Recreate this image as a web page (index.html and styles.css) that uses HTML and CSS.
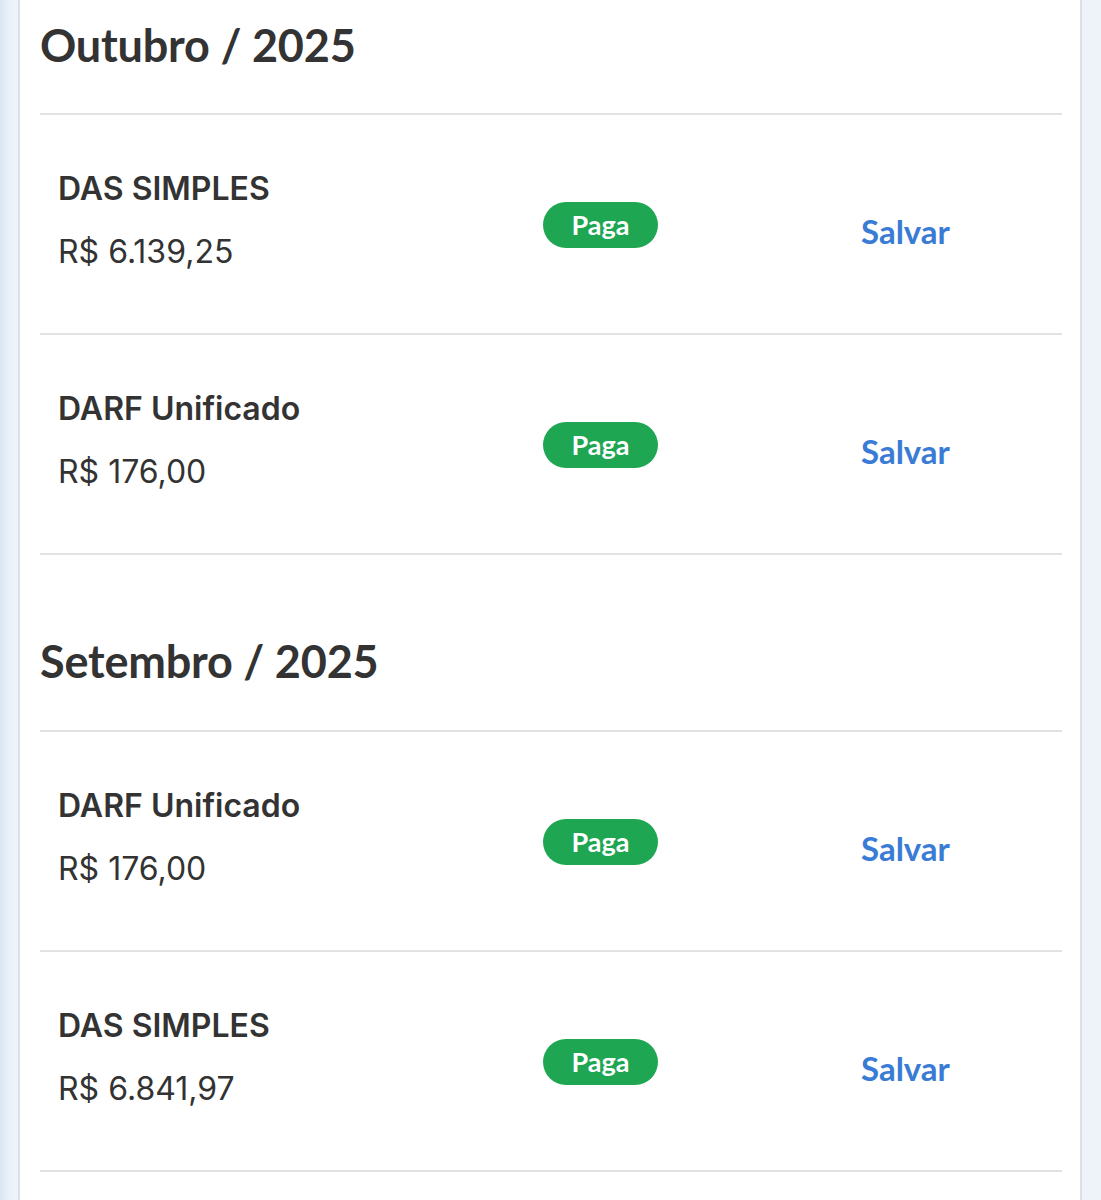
FILE: index.html
```html
<!DOCTYPE html>
<html lang="pt-BR">
<head>
<meta charset="utf-8">
<title>Guias</title>
<link rel="stylesheet" href="styles.css">
</head>
<body>
<div class="page">
  <main class="card">
    <section class="month">
      <h2 class="month-title">Outubro / 2025</h2>
      <div class="row">
        <div class="info">
          <div class="name">DAS SIMPLES</div>
          <div class="amount">R$ 6.139,25</div>
        </div>
        <span class="badge">Paga</span>
        <a class="save" href="#">Salvar</a>
      </div>
      <div class="row">
        <div class="info">
          <div class="name">DARF Unificado</div>
          <div class="amount">R$ 176,00</div>
        </div>
        <span class="badge">Paga</span>
        <a class="save" href="#">Salvar</a>
      </div>
    </section>
    <section class="month">
      <h2 class="month-title">Setembro / 2025</h2>
      <div class="row">
        <div class="info">
          <div class="name">DARF Unificado</div>
          <div class="amount">R$ 176,00</div>
        </div>
        <span class="badge">Paga</span>
        <a class="save" href="#">Salvar</a>
      </div>
      <div class="row">
        <div class="info">
          <div class="name">DAS SIMPLES</div>
          <div class="amount">R$ 6.841,97</div>
        </div>
        <span class="badge">Paga</span>
        <a class="save" href="#">Salvar</a>
      </div>
    </section>
  </main>
</div>
</body>
</html>
```

FILE: styles.css
```css
html, body {
  margin: 0;
  padding: 0;
}
body {
  background: linear-gradient(to right, #dbe6f2 0px, #eaf1f8 10px, #eef4fa 18px, #eef3fa 100%);
  font-family: "Inter", "Noto Sans", sans-serif;
  color: #333333;
  min-height: 1200px;
}
.page {
  padding: 0 19px 0 18px;
}
.card {
  background: #ffffff;
  border-left: 2px solid #dcdfe3;
  border-right: 2px solid #dcdfe3;
  padding: 0 18px 0 20px;
  min-height: 1200px;
}
.month-title {
  margin: 0;
  font-family: "Lato", "Inter", sans-serif;
  font-weight: 700;
  font-size: 45px;
  line-height: 56px;
  letter-spacing: -0.2px;
  color: #333333;
  padding: 78px 0 41px 0;
  border-bottom: 2px solid #e2e2e2;
}
.month:first-child .month-title {
  padding-top: 17px;
  padding-bottom: 40px;
}
.row {
  display: grid;
  grid-template-columns: 485px 115px 203px auto;
  align-items: center;
  padding: 52px 18px 59px 18px;
  border-bottom: 2px solid #e2e2e2;
}
.name {
  font-weight: 600;
  font-size: 32px;
  line-height: 44px;
}
.amount {
  font-weight: 400;
  font-size: 32px;
  line-height: 44px;
  margin-top: 19px;
}
.badge {
  grid-column: 2;
  display: flex;
  align-items: center;
  justify-content: center;
  height: 46px;
  border-radius: 23px;
  background: #1ea653;
  color: #ffffff;
  font-family: "Lato", sans-serif;
  font-weight: 700;
  font-size: 27px;
  margin-top: 8px;
}
.save {
  grid-column: 4;
  font-family: "Lato", sans-serif;
  font-weight: 700;
  font-size: 33px;
  line-height: 40px;
  color: #3a7bd5;
  text-decoration: none;
  margin-top: 20px;
}
```
